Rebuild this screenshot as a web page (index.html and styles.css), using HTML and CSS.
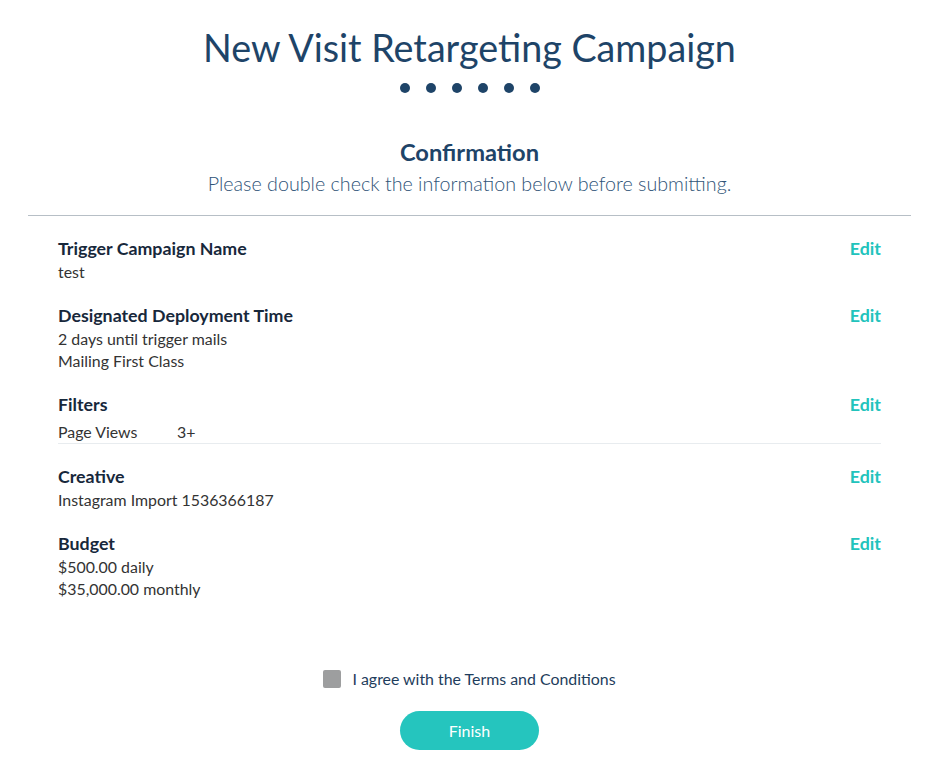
FILE: index.html
```html
<!DOCTYPE html>
<html lang="en">

<head>
    <meta charset="UTF-8">
    <meta name="viewport" content="width=device-width, initial-scale=1.0">
    <link rel="stylesheet" href="styles.css">
    <title>New Visit Retargeting Campaign</title>
</head>

<body>
    <div class="wizard">
        <h1 class="titulo">New Visit Retargeting Campaign</h1>
        <div class="pasos">
            <span class="punto"></span>
            <span class="punto"></span>
            <span class="punto"></span>
            <span class="punto"></span>
            <span class="punto"></span>
            <span class="punto"></span>
        </div>

        <h2 class="subtitulo">Confirmation</h2>
        <p class="ayuda">Please double check the information below before submitting.</p>

        <div class="resumen">
            <div class="seccion">
                <div class="cabecera">
                    <span class="etiqueta">Trigger Campaign Name</span>
                    <a href="#" class="editar">Edit</a>
                </div>
                <div class="valor">test</div>
            </div>

            <div class="seccion">
                <div class="cabecera">
                    <span class="etiqueta">Designated Deployment Time</span>
                    <a href="#" class="editar">Edit</a>
                </div>
                <div class="valor">2 days until trigger mails</div>
                <div class="valor">Mailing First Class</div>
            </div>

            <div class="seccion">
                <div class="cabecera">
                    <span class="etiqueta">Filters</span>
                    <a href="#" class="editar">Edit</a>
                </div>
                <div class="filtro">
                    <span class="filtro-nombre">Page Views</span>
                    <span>3+</span>
                </div>
            </div>

            <div class="seccion">
                <div class="cabecera">
                    <span class="etiqueta">Creative</span>
                    <a href="#" class="editar">Edit</a>
                </div>
                <div class="valor">Instagram Import 1536366187</div>
            </div>

            <div class="seccion">
                <div class="cabecera">
                    <span class="etiqueta">Budget</span>
                    <a href="#" class="editar">Edit</a>
                </div>
                <div class="valor">$500.00 daily</div>
                <div class="valor">$35,000.00 monthly</div>
            </div>
        </div>

        <label class="acepto">
            <span class="casilla"></span>
            I agree with the Terms and Conditions
        </label>

        <div class="acciones">
            <a href="#" class="boton">Finish</a>
        </div>
    </div>
</body>

</html>
```

FILE: styles.css
```css
body {
    font-family: Lato, "Open Sans", Arial, sans-serif;
    background-color: #fff;
    color: #333;
    margin: 0;
}

.wizard {
    padding: 24px 25px 0 28px;
}

.titulo {
    margin: 0;
    font-size: 37.7px;
    font-weight: 400;
    line-height: 48px;
    text-align: center;
    color: #1e4468;
}

.pasos {
    display: flex;
    justify-content: center;
    gap: 16px;
    margin-top: 11px;
}

.punto {
    width: 10px;
    height: 10px;
    border-radius: 50%;
    background-color: #1e4468;
}

.subtitulo {
    margin: 44px 0 0 0;
    font-size: 23.7px;
    font-weight: 700;
    line-height: 30px;
    text-align: center;
    color: #1e4468;
}

.ayuda {
    margin: 5px 0 0 0;
    font-size: 19.7px;
    font-weight: 300;
    line-height: 24px;
    text-align: center;
    color: #2f5478;
}

.resumen {
    border-top: 1px solid #b7bfc6;
    margin-top: 19px;
    padding: 19px 30px 0 30px;
}

.seccion {
    margin-bottom: 19px;
}

.cabecera {
    display: flex;
    justify-content: space-between;
    align-items: center;
    line-height: 26px;
}

.etiqueta {
    font-size: 17.8px;
    font-weight: 700;
    color: #17283b;
}

.editar {
    font-size: 17.8px;
    font-weight: 700;
    color: #22c3bc;
    text-decoration: none;
}

.valor {
    font-size: 15.9px;
    line-height: 22px;
    color: #333;
}

.filtro {
    display: flex;
    font-size: 15.9px;
    line-height: 23px;
    color: #333;
    padding-top: 3px;
    border-bottom: 1px solid #e8ecef;
}

.filtro-nombre {
    width: 119px;
}

.acepto {
    display: flex;
    justify-content: center;
    align-items: center;
    gap: 11px;
    margin-top: 68px;
    font-size: 15.9px;
    line-height: 22px;
    color: #1e3d5c;
}

.casilla {
    width: 18px;
    height: 18px;
    border-radius: 2px;
    background-color: #9d9e9f;
}

.acciones {
    display: flex;
    justify-content: center;
    margin-top: 21px;
}

.boton {
    display: inline-block;
    width: 139px;
    height: 39px;
    line-height: 39px;
    text-align: center;
    font-size: 16px;
    color: white;
    background-color: #25c5be;
    text-decoration: none;
    border-radius: 20px;
}
```
